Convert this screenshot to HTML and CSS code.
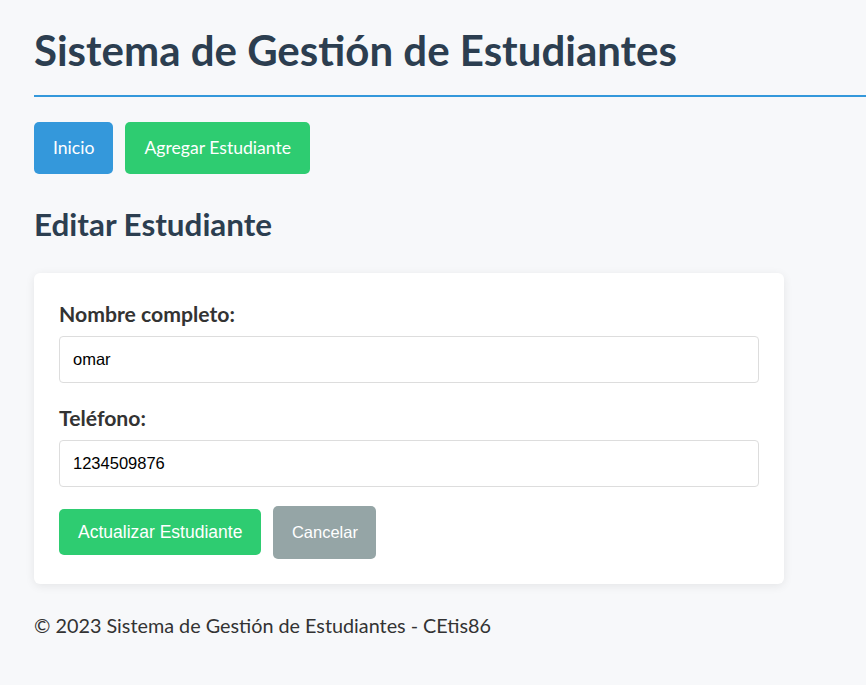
FILE: index.html
```html
<!DOCTYPE html>
<html lang="es">
<head>
<meta charset="utf-8">
<title>Sistema de Gestión de Estudiantes</title>
<link rel="stylesheet" href="styles.css">
</head>
<body>
<div class="page">
  <header class="site-header">
    <h1 class="site-title">Sistema de Gestión de Estudiantes</h1>
  </header>
  <nav class="nav">
    <a class="nav-btn nav-btn-blue" href="#">Inicio</a>
    <a class="nav-btn nav-btn-green" href="#">Agregar Estudiante</a>
  </nav>
  <main>
    <h2 class="section-title">Editar Estudiante</h2>
    <form class="card">
      <div class="form-group">
        <label class="form-label" for="nombre">Nombre completo:</label>
        <input class="form-input" id="nombre" type="text" value="omar">
      </div>
      <div class="form-group">
        <label class="form-label" for="telefono">Teléfono:</label>
        <input class="form-input" id="telefono" type="text" value="1234509876">
      </div>
      <div class="form-actions">
        <button class="btn-submit" type="button">Actualizar Estudiante</button>
        <a class="btn-cancel" href="#">Cancelar</a>
      </div>
    </form>
  </main>
  <footer class="site-footer">© 2023 Sistema de Gestión de Estudiantes - CEtis86</footer>
</div>
</body>
</html>
```
FILE: styles.css
```css
html, body {
  margin: 0;
  padding: 0;
  background: #f7f8fa;
}

body {
  font-family: "Lato", "Open Sans", sans-serif;
  color: #333333;
}

.page {
  padding: 25px 0 40px 34px;
}

.site-header {
  padding-bottom: 20px;
  border-bottom: 2px solid #3498db;
}

.site-title {
  margin: 0;
  font-size: 42px;
  line-height: 50px;
  font-weight: 700;
  color: #2c3e50;
}

.nav {
  display: flex;
  gap: 12px;
  margin-top: 25px;
}

.nav-btn {
  display: block;
  padding: 15px 19px;
  font-size: 17.6px;
  line-height: 22px;
  color: #ffffff;
  text-decoration: none;
  border-radius: 5px;
}

.nav-btn-blue {
  background: #3498db;
}

.nav-btn-green {
  background: #2ecc71;
}

.section-title {
  margin: 31px 0 30px;
  font-size: 31.4px;
  line-height: 38px;
  font-weight: 700;
  color: #2c3e50;
}

.card {
  max-width: 750px;
  box-sizing: border-box;
  padding: 27px 25px 25px;
  background: #ffffff;
  border-radius: 6px;
  box-shadow: 0 2px 10px rgba(0, 0, 0, 0.08);
}

.form-group + .form-group {
  margin-top: 21px;
}

.form-label {
  display: block;
  margin-bottom: 8px;
  font-size: 21.2px;
  line-height: 28px;
  font-weight: 700;
  color: #333333;
}

.form-input {
  display: block;
  width: 100%;
  height: 47px;
  box-sizing: border-box;
  margin: 0;
  padding: 0 13px;
  border: 1px solid #dddddd;
  border-radius: 4px;
  background: #ffffff;
  font-family: "Liberation Sans", Arial, sans-serif;
  font-size: 16.5px;
  color: #000000;
}

.form-actions {
  display: flex;
  align-items: baseline;
  gap: 12px;
  margin-top: 19px;
}

.btn-submit {
  margin: 0;
  padding: 12px 19px;
  border: none;
  border-radius: 5px;
  background: #2ecc71;
  color: #ffffff;
  font-family: "Liberation Sans", Arial, sans-serif;
  font-size: 17.5px;
  line-height: 22px;
}

.btn-cancel {
  display: block;
  padding: 12px 18.5px;
  border-radius: 5px;
  background: #95a5a6;
  color: #ffffff;
  text-decoration: none;
  font-family: "Liberation Sans", Arial, sans-serif;
  font-size: 16.5px;
  line-height: 29px;
}

.site-footer {
  margin-top: 30px;
  font-size: 19.8px;
  line-height: 22px;
  color: #333333;
}
```
